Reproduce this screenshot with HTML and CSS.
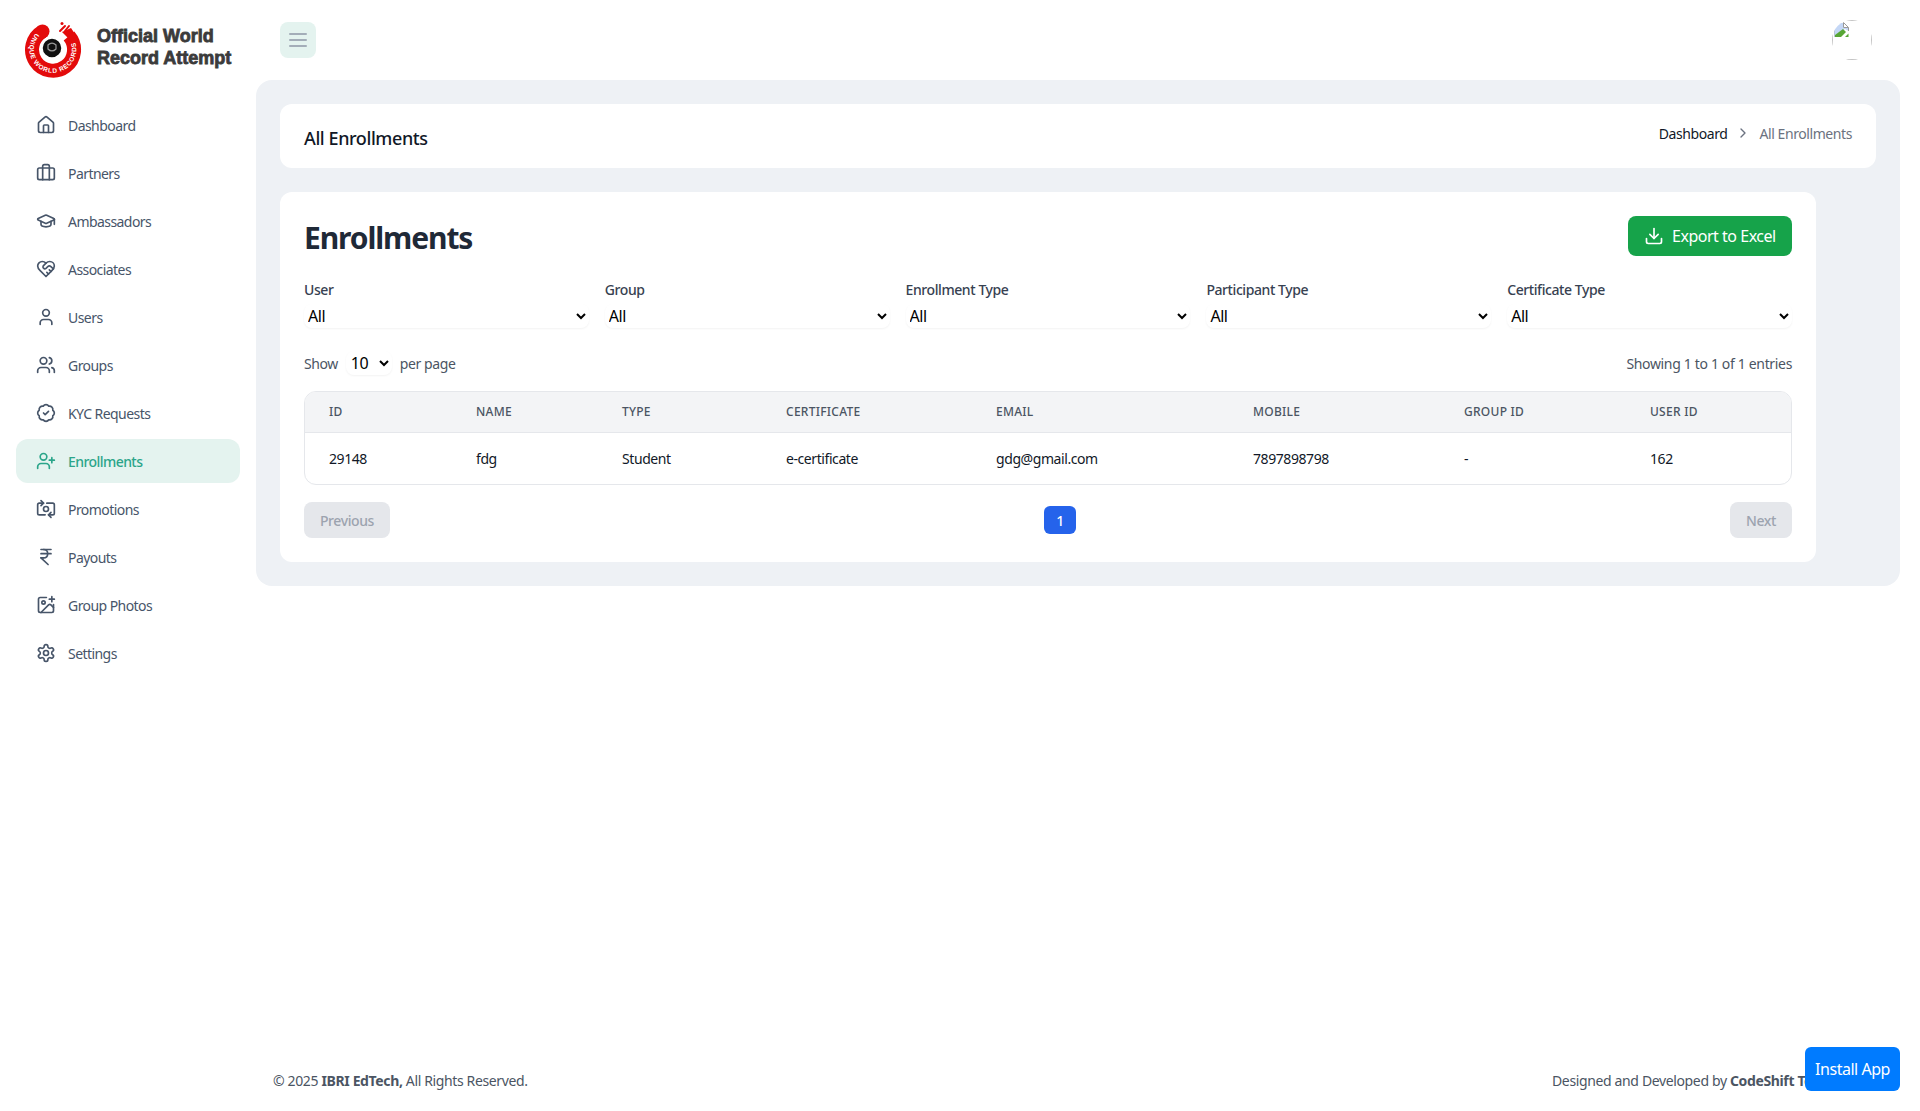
FILE: index.html
```html
<!DOCTYPE html>
<html lang="en">
<head>
<meta charset="utf-8">
<title>All Enrollments</title>
<link rel="stylesheet" href="styles.css">
</head>
<body>
<div class="app">
  <aside class="sidebar">
    <div class="brand">
      <svg class="logo" viewBox="0 0 60 60" aria-hidden="true">
        <path class="logo-ring" d="M18.500 11.500 A21 21 0 1 0 45 16"/>
        <circle class="logo-cap" cx="18.500" cy="11.500" r="7"/>
        <path class="logo-horn" d="M38 12 L47 8 L53 17 L46 20z"/>
        <circle class="logo-dot" cx="38" cy="3.500" r="1.500"/>
        <path class="logo-tick" d="M36 11 L41 6 M41 11 L45 6"/>
        <circle class="logo-seal" cx="28" cy="28" r="10.500"/>
        <path class="logo-crest" d="M24 25 q4 -4 8 0 v4 q-4 4 -8 0z"/>
        <path id="logo-arc" class="logo-none" d="M12 13 A23.500 23.500 0 1 0 50.500 20"/>
        <text class="logo-text"><textPath href="#logo-arc" textLength="98" lengthAdjust="spacing">UNIQUE WORLD RECORDS</textPath></text>
      </svg>
      <div class="brand-name">Official World<br>Record Attempt</div>
    </div>
    <nav class="nav">
      <a class="nav-item"><svg class="ico" viewBox="0 0 24 24"><path d="M15 21v-8a1 1 0 0 0-1-1h-4a1 1 0 0 0-1 1v8"/><path d="M3 10a2 2 0 0 1 .709-1.528l7-5.999a2 2 0 0 1 2.582 0l7 5.999A2 2 0 0 1 21 10v9a2 2 0 0 1-2 2H5a2 2 0 0 1-2-2z"/></svg>Dashboard</a>
      <a class="nav-item"><svg class="ico" viewBox="0 0 24 24"><path d="M16 20V4a2 2 0 0 0-2-2h-4a2 2 0 0 0-2 2v16"/><rect width="20" height="14" x="2" y="6" rx="2"/></svg>Partners</a>
      <a class="nav-item"><svg class="ico" viewBox="0 0 24 24"><path d="M21.42 10.922a1 1 0 0 0-.019-1.838L12.83 5.18a2 2 0 0 0-1.66 0L2.6 9.08a1 1 0 0 0 0 1.832l8.57 3.908a2 2 0 0 0 1.66 0z"/><path d="M22 10v6"/><path d="M6 12.5V16a6 3 0 0 0 12 0v-3.5"/></svg>Ambassadors</a>
      <a class="nav-item"><svg class="ico" viewBox="0 0 24 24"><path d="M19 14c1.49-1.46 3-3.21 3-5.5A5.5 5.5 0 0 0 16.5 3c-1.76 0-3 .5-4.5 2-1.5-1.5-2.74-2-4.5-2A5.5 5.5 0 0 0 2 8.5c0 2.3 1.5 4.05 3 5.5l7 7Z"/><path d="M12 5 9.04 7.96a2.17 2.17 0 0 0 0 3.08c.82.82 2.13.85 3 .07l2.07-1.9a2.82 2.82 0 0 1 3.79 0l2.96 2.66"/><path d="m18 15-2-2"/><path d="m15 18-2-2"/></svg>Associates</a>
      <a class="nav-item"><svg class="ico" viewBox="0 0 24 24"><path d="M19 21v-2a4 4 0 0 0-4-4H9a4 4 0 0 0-4 4v2"/><circle cx="12" cy="7" r="4"/></svg>Users</a>
      <a class="nav-item"><svg class="ico" viewBox="0 0 24 24"><path d="M16 21v-2a4 4 0 0 0-4-4H6a4 4 0 0 0-4 4v2"/><circle cx="9" cy="7" r="4"/><path d="M22 21v-2a4 4 0 0 0-3-3.87"/><path d="M16 3.13a4 4 0 0 1 0 7.75"/></svg>Groups</a>
      <a class="nav-item"><svg class="ico" viewBox="0 0 24 24"><path d="M3.85 8.62a4 4 0 0 1 4.78-4.77 4 4 0 0 1 6.74 0 4 4 0 0 1 4.78 4.78 4 4 0 0 1 0 6.74 4 4 0 0 1-4.77 4.78 4 4 0 0 1-6.75 0 4 4 0 0 1-4.78-4.77 4 4 0 0 1 0-6.76Z"/><path d="m9 12 2 2 4-4"/></svg>KYC Requests</a>
      <a class="nav-item active"><svg class="ico" viewBox="0 0 24 24"><path d="M16 21v-2a4 4 0 0 0-4-4H6a4 4 0 0 0-4 4v2"/><circle cx="9" cy="7" r="4"/><path d="M19 8v6"/><path d="M22 11h-6"/></svg>Enrollments</a>
      <a class="nav-item"><svg class="ico" viewBox="0 0 24 24"><path d="M11 19H4a2 2 0 0 1-2-2V7a2 2 0 0 1 2-2h5"/><path d="M13 5h7a2 2 0 0 1 2 2v10a2 2 0 0 1-2 2h-5"/><circle cx="12" cy="12" r="3"/><path d="m18 22-3-3 3-3"/><path d="m6 2 3 3-3 3"/></svg>Promotions</a>
      <a class="nav-item"><svg class="ico" viewBox="0 0 24 24"><path d="M6 3h12"/><path d="M6 8h12"/><path d="m6 13 8.5 8"/><path d="M6 13h3"/><path d="M9 13c6.667 0 6.667-10 0-10"/></svg>Payouts</a>
      <a class="nav-item"><svg class="ico" viewBox="0 0 24 24"><path d="M16 5h6"/><path d="M19 2v6"/><path d="M21 11.5V19a2 2 0 0 1-2 2H5a2 2 0 0 1-2-2V5a2 2 0 0 1 2-2h7.5"/><path d="m21 15-3.086-3.086a2 2 0 0 0-2.828 0L6 21"/><circle cx="9" cy="9" r="2"/></svg>Group Photos</a>
      <a class="nav-item"><svg class="ico" viewBox="0 0 24 24"><path d="M12.22 2h-.44a2 2 0 0 0-2 2v.18a2 2 0 0 1-1 1.73l-.43.25a2 2 0 0 1-2 0l-.15-.08a2 2 0 0 0-2.73.73l-.22.38a2 2 0 0 0 .73 2.73l.15.1a2 2 0 0 1 1 1.72v.51a2 2 0 0 1-1 1.74l-.15.09a2 2 0 0 0-.73 2.73l.22.38a2 2 0 0 0 2.73.73l.15-.08a2 2 0 0 1 2 0l.43.25a2 2 0 0 1 1 1.73V20a2 2 0 0 0 2 2h.44a2 2 0 0 0 2-2v-.18a2 2 0 0 1 1-1.73l.43-.25a2 2 0 0 1 2 0l.15.08a2 2 0 0 0 2.73-.73l.22-.39a2 2 0 0 0-.73-2.73l-.15-.08a2 2 0 0 1-1-1.74v-.5a2 2 0 0 1 1-1.74l.15-.09a2 2 0 0 0 .73-2.73l-.22-.38a2 2 0 0 0-2.73-.73l-.15.08a2 2 0 0 1-2 0l-.43-.25a2 2 0 0 1-1-1.73V4a2 2 0 0 0-2-2z"/><circle cx="12" cy="12" r="3"/></svg>Settings</a>
    </nav>
  </aside>
  <div class="main">
    <header class="topbar">
      <button class="menu-btn" aria-label="Menu"><svg class="menu-ico" viewBox="0 0 24 24"><path d="M4 6h16"/><path d="M4 12h16"/><path d="M4 18h16"/></svg></button>
      <div class="avatar">
        <div class="avatar-frame">
          <svg class="broken" viewBox="0 0 16 16" aria-hidden="true">
            <path d="M1 1h8v5h5.500v3L11 7 1 13z" fill="#c4d7f6"/>
            <path d="M1 15v-2l8-6 3 3-5 5z" fill="#58a635"/>
            <path d="M11 15l3.500-3.500V15z" fill="#58a635"/>
            <path d="M9.500 .5v5h5M9.500 .5l5 5V9" fill="none" stroke="#9a9a9a"/>
            <path d="M.5 1v14" stroke="#b9c6d6"/>
          </svg>
        </div>
      </div>
    </header>
    <main class="panel">
      <section class="crumb-card">
        <h2 class="crumb-title">All Enrollments</h2>
        <div class="crumbs"><span class="crumb-link">Dashboard</span><svg class="crumb-sep" viewBox="0 0 24 24"><path d="m9 18 6-6-6-6"/></svg><span class="crumb-now">All Enrollments</span></div>
      </section>
      <section class="card">
        <div class="card-head">
          <h1 class="card-title">Enrollments</h1>
          <button class="export"><svg class="export-ico" viewBox="0 0 24 24"><path d="M12 15V3"/><path d="M21 15v4a2 2 0 0 1-2 2H5a2 2 0 0 1-2-2v-4"/><path d="m7 10 5 5 5-5"/></svg>Export to Excel</button>
        </div>
        <div class="filters">
          <label class="filter"><span class="filter-label">User</span><select class="select"><option>All</option></select></label>
          <label class="filter"><span class="filter-label">Group</span><select class="select"><option>All</option></select></label>
          <label class="filter"><span class="filter-label">Enrollment Type</span><select class="select"><option>All</option></select></label>
          <label class="filter"><span class="filter-label">Participant Type</span><select class="select"><option>All</option></select></label>
          <label class="filter"><span class="filter-label">Certificate Type</span><select class="select"><option>All</option></select></label>
        </div>
        <div class="table-bar">
          <div class="per-page">Show <select class="select select-small"><option>10</option></select> per page</div>
          <div class="entries">Showing 1 to 1 of 1 entries</div>
        </div>
        <div class="table-wrap">
          <table class="table">
            <thead><tr><th>ID</th><th>Name</th><th>Type</th><th>Certificate</th><th>Email</th><th>Mobile</th><th>Group ID</th><th>User ID</th></tr></thead>
            <tbody><tr><td>29148</td><td>fdg</td><td>Student</td><td>e-certificate</td><td>gdg@gmail.com</td><td>7897898798</td><td>-</td><td>162</td></tr></tbody>
          </table>
        </div>
        <div class="pager">
          <button class="pager-btn">Previous</button>
          <button class="page-num">1</button>
          <button class="pager-btn">Next</button>
        </div>
      </section>
    </main>
    <footer class="footer">
      <div>© 2025 <b>IBRI EdTech,</b> All Rights Reserved.</div>
      <div>Designed and Developed by <b>CodeShift Technologies</b></div>
    </footer>
  </div>
</div>
<button class="install">Install App</button>
</body>
</html>
```
FILE: styles.css
```css
* { box-sizing: border-box; letter-spacing: -.03em; }
html, body { margin: 0; height: 100%; }
body {
  font-family: "Noto Sans", "Open Sans", sans-serif;
  color: #111827;
  background: #fff;
  font-size: 14px;
  overflow: hidden;
}
.app { display: flex; height: 100vh; }

.sidebar { width: 256px; flex: none; padding: 0 16px; }
.brand { height: 103px; display: flex; align-items: flex-start; gap: 13px; padding: 20px 0 0 8px; }
.logo { width: 60px; height: 60px; flex: none; }
.logo-ring { fill: none; stroke: #e30b0b; stroke-width: 14; }
.logo-cap, .logo-dot, .logo-horn { fill: #e30b0b; }
.logo-tick { stroke: #e30b0b; stroke-width: 2; stroke-linecap: round; fill: none; }
.logo-seal { fill: #111; stroke: #fff; stroke-width: 2.500; }
.logo-crest { fill: none; stroke: #9a9a9a; stroke-width: 1.2; }
.logo-none { fill: none; stroke: none; }
.logo-text { font: 700 6.5px "Liberation Sans", sans-serif; fill: #fff; letter-spacing: 0; }
.brand-name {
  font-family: "Liberation Sans", sans-serif;
  font-weight: 700;
  font-size: 18px;
  line-height: 22px;
  letter-spacing: 0;
  color: #3b3b3b;
  -webkit-text-stroke: 0.8px #3b3b3b;
  white-space: nowrap;
  padding-top: 5px;
}
.nav { display: flex; flex-direction: column; gap: 4px; }
.nav-item {
  height: 44px;
  border-radius: 12px;
  padding-left: 20px;
  display: flex;
  align-items: center;
  gap: 12px;
  color: #475569;
  font-size: 14px;
  letter-spacing: -.04em;
}
.ico {
  width: 20px; height: 20px; flex: none;
  fill: none; stroke: #475569; stroke-width: 2; stroke-linecap: round; stroke-linejoin: round;
}
.nav-item.active { background: #e4f3ef; color: #2ba58a; font-weight: 500; }
.nav-item.active .ico { stroke: #2ba58a; }

.main { flex: 1; min-width: 0; display: flex; flex-direction: column; padding-right: 20px; }
.topbar { height: 80px; flex: none; display: flex; align-items: flex-start; justify-content: space-between; padding: 20px 28px 0 24px; }
.menu-btn { width: 36px; height: 36px; margin-top: 2px; border: 0; border-radius: 8px; background: #e4f3ef; padding: 6px; display: flex; }
.menu-ico { width: 24px; height: 24px; fill: none; stroke: #a3adb8; stroke-width: 2; stroke-linecap: round; }
.avatar { width: 40px; height: 40px; border-radius: 50%; overflow: hidden; }
.avatar-frame { width: 100%; height: 100%; border: 1px solid #c4c4c4; padding: 1px; }
.broken { display: block; width: 16px; height: 16px; }

.panel { background: #eef1f5; border-radius: 16px; padding: 24px; display: flex; flex-direction: column; gap: 24px; }
.crumb-card { height: 64px; background: #fff; border-radius: 12px; padding: 0 24px; display: flex; align-items: center; justify-content: space-between; }
.crumb-title { margin: 4px 0 0; font-size: 18px; font-weight: 500; line-height: 28px; color: #111827; letter-spacing: -.023em; }
.crumbs { display: flex; align-items: center; gap: 8px; font-size: 14px; margin-top: -6px; }
.crumb-link { color: #111827; }
.crumb-now { color: #6b7280; }
.crumb-sep { width: 16px; height: 16px; fill: none; stroke: #6b7280; stroke-width: 2; stroke-linecap: round; stroke-linejoin: round; }

.card { width: 1536px; background: #fff; border-radius: 12px; padding: 24px; }
.card-head { display: flex; justify-content: space-between; align-items: flex-start; }
.card-title { margin: 4px 0 0; font-size: 30px; line-height: 36px; font-weight: 700; color: #1f2937; letter-spacing: -.037em; }
.export { height: 40px; width: 164px; border: 0; border-radius: 8px; background: #16a34a; color: #fff; font: 16px "Noto Sans", sans-serif; display: flex; align-items: center; padding: 0 0 0 16px; gap: 8px; }
.export-ico { width: 20px; height: 20px; flex: none; fill: none; stroke: #fff; stroke-width: 2; stroke-linecap: round; stroke-linejoin: round; }

.filters { display: grid; grid-template-columns: repeat(5, 1fr); gap: 16px; margin-top: 24px; }
.filter { display: flex; flex-direction: column; }
.filter-label { font-size: 14px; line-height: 20px; font-weight: 500; color: #374151; }
.select {
  font: 16px "Noto Sans", sans-serif;
  color: #000;
  background: #fff;
  border: 0;
  border-radius: 8px;
  box-shadow: 0 1px 2px rgba(0,0,0,.05);
  height: 24px;
  padding: 0;
  width: 100%;
  margin-top: 4px;
  outline: 0;
}
.select-small { width: 46px; margin: 0; padding-left: 1px; }

.table-bar { display: flex; justify-content: space-between; align-items: center; margin-top: 23px; height: 24px; font-size: 14px; color: #4b5563; }
.per-page { display: flex; align-items: center; gap: 8px; }
.entries { letter-spacing: -.024em; }

.table-wrap { margin-top: 16px; border: 1px solid #e5e7eb; border-radius: 12px; overflow: hidden; }
.table { width: 100%; border-collapse: collapse; table-layout: fixed; }
.table th { height: 40px; background: #f3f4f6; border-bottom: 1px solid #e5e7eb; padding: 0 0 0 24px; text-align: left; font-size: 12px; font-weight: 500; letter-spacing: .022em; text-transform: uppercase; color: #4b5563; }
.table td { height: 52px; padding: 0 0 0 24px; font-size: 14px; color: #111827; }
.table th:nth-child(1) { width: 147px; }
.table th:nth-child(2) { width: 146px; }
.table th:nth-child(3) { width: 164px; }
.table th:nth-child(4) { width: 210px; }
.table th:nth-child(5) { width: 257px; }
.table th:nth-child(6) { width: 211px; }
.table th:nth-child(7) { width: 186px; }

.pager { display: flex; justify-content: space-between; align-items: center; margin-top: 17px; }
.pager-btn { height: 36px; padding: 0 16px; border: 0; border-radius: 8px; background: #e5e7eb; color: #9ca3af; font: 500 14px "Noto Sans", sans-serif; }
.page-num { width: 32px; height: 28px; border: 0; border-radius: 6px; background: #2563eb; color: #fff; font: 500 14px "Noto Sans", sans-serif; }

.footer { margin-top: auto; height: 40px; flex: none; display: flex; justify-content: space-between; padding: 0 16px 0 17px; font-size: 14px; color: #4b5563; line-height: 20px; }
.footer div, .footer b { letter-spacing: -.026em; }
.install { position: fixed; right: 20px; bottom: 20px; width: 95px; height: 44px; border: 0; border-radius: 6px; background: #007bff; color: #fff; font: 16px "Noto Sans", sans-serif; padding: 0; }
```
